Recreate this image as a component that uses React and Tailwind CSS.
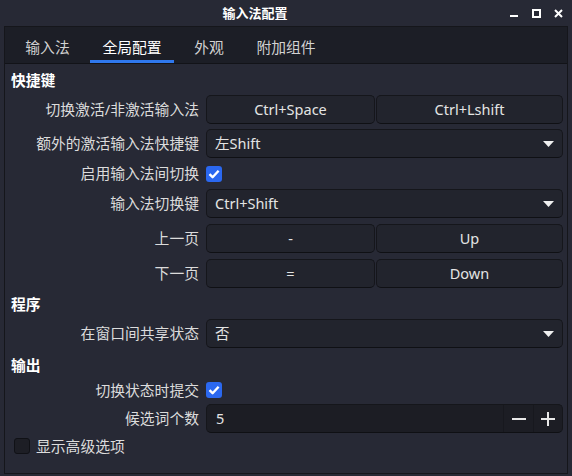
import React from 'react';

const font = { fontFamily: '"Noto Sans", "Noto Sans CJK SC", sans-serif' };

const tabs = [
  { name: '输入法', w: 'w-[85px]' },
  { name: '全局配置', w: 'w-[84px]', active: true },
  { name: '外观', w: 'w-[70px]' },
  { name: '附加组件', w: 'w-[84px]' },
];

const Check = ({ on }) => (
  <div
    className={
      'w-[16px] h-[16px] rounded-[3px] flex items-center justify-center ' +
      (on ? 'bg-[#2b68f0]' : 'bg-[#1d1e25] border border-[#101116]')
    }
  >
    {on && (
      <svg width="12" height="10" viewBox="0 0 12 10">
        <path d="M1.5 5.2 L4.6 8.2 L10.6 1.8" fill="none" stroke="#fff" strokeWidth="2.4" strokeLinejoin="round" />
      </svg>
    )}
  </div>
);

const Label = ({ children }) => (
  <div className="w-[188px] shrink-0 text-right text-[#dcdcdc] text-[14.8px] leading-none pr-[0px]">{children}</div>
);

const Row = ({ label, mt, h = 'h-[29px]', children }) => (
  <div className={'flex items-center ' + mt + ' ' + h}>
    <Label>{label}</Label>
    <div className="ml-[7px] flex-1 h-full flex items-center">{children}</div>
  </div>
);

const Btn = ({ children, className = '' }) => (
  <div
    className={
      'h-full flex items-center justify-center rounded-[5px] bg-[#22242d] border border-[#15161b] border-b-[#0f1014] text-[#e4e4e4] text-[14.5px] ' +
      className
    }
  >
    {children}
  </div>
);

const Select = ({ value }) => (
  <div className="w-full h-full flex items-center justify-between rounded-[5px] bg-[#22242d] border border-[#15161b] border-b-[#0f1014] pl-[8px] pr-[8px] text-[#e4e4e4] text-[14.5px]">
    <span>{value}</span>
    <svg width="11" height="6" viewBox="0 0 11 6">
      <path d="M0 0 H11 L5.5 6 Z" fill="#f0f0f0" />
    </svg>
  </div>
);

const Header = ({ children, mt }) => (
  <div className={'h-[26px] flex items-center text-white font-bold text-[14.8px] ' + mt}>{children}</div>
);

export default function App() {
  return (
    <div className="w-[572px] h-[476px] bg-[#272935] flex flex-col overflow-hidden" style={font}>
      <div className="h-[26px] shrink-0 flex items-center">
        <div className="w-[510px] text-center text-white font-bold text-[13px] leading-none">输入法配置</div>
        <div className="flex items-center">
          <div className="w-[8px] h-[2px] bg-white mt-[6px] ml-[0px]" />
          <div className="w-[9px] h-[9px] border-2 border-white ml-[14px]" />
          <svg className="ml-[13px]" width="9" height="9" viewBox="0 0 9 9">
            <path d="M1 1 L8 8 M8 1 L1 8" stroke="#fff" strokeWidth="2" />
          </svg>
        </div>
      </div>
      <div className="mx-[4px] w-[564px] h-[448px] border border-[#15161b] flex flex-col">
        <div className="h-[37px] shrink-0 bg-[#1c1e26] border-b border-[#121318] flex">
          {tabs.map((t) => (
            <div key={t.name} className={'relative h-full flex items-center justify-center ' + t.w}>
              <span className={'text-[14.8px] mt-[4px] ' + (t.active ? 'text-white' : 'text-[#d2d2d2]')}>{t.name}</span>
              {t.active && <div className="absolute left-0 right-0 bottom-0 h-[3px] bg-[#2f78ee]" />}
            </div>
          ))}
        </div>
        <div className="flex flex-col pl-[6px] pr-[4px]">
          <Header mt="mt-[3px]">快捷键</Header>
          <Row label="切换激活/非激活输入法" mt="mt-[2px]">
            <Btn className="w-[169px]">Ctrl+Space</Btn>
            <Btn className="ml-[1px] flex-1">Ctrl+Lshift</Btn>
          </Row>
          <Row label="额外的激活输入法快捷键" mt="mt-[5px]">
            <Select value="左Shift" />
          </Row>
          <Row label="启用输入法间切换" mt="mt-[6px]" h="h-[19px]">
            <Check on />
          </Row>
          <Row label="输入法切换键" mt="mt-[6px]">
            <Select value="Ctrl+Shift" />
          </Row>
          <Row label="上一页" mt="mt-[6px]">
            <Btn className="w-[169px]">-</Btn>
            <Btn className="ml-[1px] flex-1">Up</Btn>
          </Row>
          <Row label="下一页" mt="mt-[6px]">
            <Btn className="w-[169px]">=</Btn>
            <Btn className="ml-[1px] flex-1">Down</Btn>
          </Row>
          <Header mt="mt-[3px]">程序</Header>
          <Row label="在窗口间共享状态" mt="mt-[2px]">
            <Select value="否" />
          </Row>
          <Header mt="mt-[4px]">输出</Header>
          <Row label="切换状态时提交" mt="mt-[2px]" h="h-[20px]">
            <Check on />
          </Row>
          <Row label="候选词个数" mt="mt-[4px]">
            <div className="w-full h-full flex rounded-[5px] bg-[#1c1d24] border border-[#15161b] border-b-[#0f1014] text-[#e4e4e4] text-[14.5px] overflow-hidden">
              <div className="flex-1 flex items-center pl-[9px]">5</div>
              <div className="w-[30px] border-l border-[#17181e] flex items-center justify-center">
                <div className="w-[14px] h-[2px] bg-[#e8e8e8]" />
              </div>
              <div className="w-[29px] border-l border-[#17181e] flex items-center justify-center">
                <svg width="14" height="14" viewBox="0 0 14 14">
                  <path d="M0 7 H14 M7 0 V14" stroke="#e8e8e8" strokeWidth="2" />
                </svg>
              </div>
            </div>
          </Row>
          <div className="mt-[5px] h-[16px] flex items-center pl-[3px]">
            <Check />
            <span className="ml-[6px] text-[#dcdcdc] text-[14.8px] leading-none">显示高级选项</span>
          </div>
        </div>
      </div>
    </div>
  );
}
